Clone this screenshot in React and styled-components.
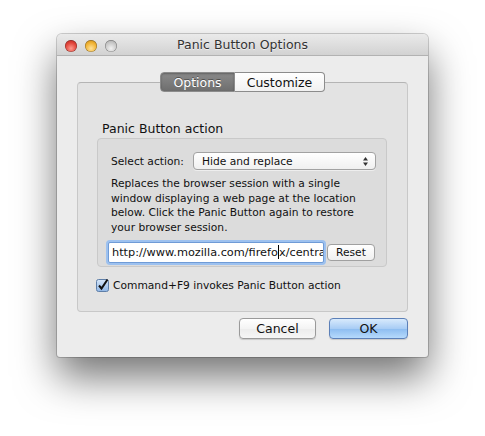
import React from "react";
import styled, { createGlobalStyle } from "styled-components";

const GlobalStyle = createGlobalStyle`
  html, body {
    margin: 0;
    background: #ffffff;
  }
  body {
    font-family: "DejaVu Sans", "Liberation Sans", sans-serif;
    font-size: 12px;
    color: #111;
  }
`;

const App = () => (
  <Page>
    <GlobalStyle />
    <Window>
      <TitleBar>
        <Lights>
          <Light $color="red" />
          <Light $color="yellow" />
          <Light $color="gray" />
        </Lights>
        <Title>Panic Button Options</Title>
      </TitleBar>
      <Body>
        <Tabs>
          <Tab $active>Options</Tab>
          <Tab>Customize</Tab>
        </Tabs>
        <TabBox>
          <GroupLabel>Panic Button action</GroupLabel>
          <Group>
            <SelectRow>
              <span>Select action:</span>
              <Popup>
                Hide and replace
                <Arrows viewBox="0 0 7 11">
                  <path d="M3.5 1 L6 4.5 H1 Z" />
                  <path d="M3.5 10 L6 6.5 H1 Z" />
                </Arrows>
              </Popup>
            </SelectRow>
            <Description>
              Replaces the browser session with a single
              <br />
              window displaying a web page at the location
              <br />
              below. Click the Panic Button again to restore
              <br />
              your browser session.
            </Description>
            <UrlRow>
              <UrlField>
                http://www.mozilla.com/firefo<Caret />x/central
              </UrlField>
              <SmallButton>Reset</SmallButton>
            </UrlRow>
          </Group>
          <CheckRow>
            <CheckBox viewBox="0 0 13 13">
              <defs>
                <linearGradient id="cb" x1="0" y1="0" x2="0" y2="1">
                  <stop offset="0" stopColor="#d6e6f8" />
                  <stop offset="1" stopColor="#8fb6e6" />
                </linearGradient>
              </defs>
              <rect x="0.5" y="0.5" width="12" height="12" rx="2" fill="url(#cb)" stroke="#5f7fa8" />
              <path d="M3 6.5 L5.5 9.5 L11.5 0.5" fill="none" stroke="#111" strokeWidth="2" />
            </CheckBox>
            Command+F9 invokes Panic Button action
          </CheckRow>
        </TabBox>
        <Buttons>
          <PushButton>Cancel</PushButton>
          <PushButton $default>OK</PushButton>
        </Buttons>
      </Body>
    </Window>
  </Page>
);

const Page = styled.div`
  padding: 34px 0 0 57px;
  height: 402px;
`;

const Window = styled.div`
  width: 371px;
  height: 323px;
  background: #ececec;
  border-radius: 5px 5px 3px 3px;
  box-shadow: 0 0 0 1px rgba(0, 0, 0, 0.18), 0 20px 40px rgba(0, 0, 0, 0.55);
  overflow: hidden;
`;

const TitleBar = styled.div`
  position: relative;
  height: 22px;
  display: flex;
  align-items: center;
  justify-content: center;
  background: linear-gradient(#eaeaea, #d2d2d2);
  border-bottom: 1px solid #b2b2b2;
  box-sizing: border-box;
`;

const Lights = styled.div`
  position: absolute;
  left: 8px;
  top: 6px;
  display: flex;
  gap: 8px;
`;

const lightColors = {
  red: "radial-gradient(circle at 50% 70%, #ff9a8e, #e0443a 55%, #a8201a)",
  yellow: "radial-gradient(circle at 50% 70%, #ffe29a, #f0b232 55%, #b57a10)",
  gray: "radial-gradient(circle at 50% 70%, #f2f2f2, #c8c8c8 55%, #9c9c9c)",
};

const Light = styled.div`
  width: 12px;
  height: 12px;
  border-radius: 50%;
  background: ${(p) => lightColors[p.$color]};
  box-shadow: inset 0 0 0 0.5px rgba(0, 0, 0, 0.4);
`;

const Title = styled.div`
  font-size: 12.5px;
  color: #333;
  text-shadow: 0 1px 0 rgba(255, 255, 255, 0.6);
`;

const Body = styled.div`
  padding: 16px 20px 0 20px;
`;

const Tabs = styled.div`
  display: flex;
  justify-content: center;
  position: relative;
  z-index: 1;
`;

const Tab = styled.div`
  height: 20px;
  box-sizing: border-box;
  display: flex;
  align-items: center;
  justify-content: center;
  font-size: 12.5px;
  border: 1px solid #8c8c8c;
  color: ${(p) => (p.$active ? "#fff" : "#111")};
  background: ${(p) =>
    p.$active
      ? "linear-gradient(#8a8a8a, #6e6e6e)"
      : "linear-gradient(#ffffff, #f1f1f1)"};
  text-shadow: ${(p) => (p.$active ? "0 -1px 0 rgba(0,0,0,0.4)" : "none")};
  box-shadow: ${(p) => (p.$active ? "inset 0 1px 2px rgba(0,0,0,0.3)" : "none")};
  &:first-child {
    border-radius: 4px 0 0 4px;
    width: 75px;
  }
  &:last-child {
    border-radius: 0 4px 4px 0;
    border-left: none;
    width: 90px;
  }
`;

const TabBox = styled.div`
  margin-top: -10px;
  height: 230px;
  box-sizing: border-box;
  background: #e3e3e3;
  border: 1px solid #c8c8c8;
  border-top-color: #b4b4b4;
  border-radius: 4px;
  padding: 38px 20px 0 19px;
`;

const GroupLabel = styled.div`
  font-size: 12.5px;
  padding-left: 5px;
  margin-bottom: 2px;
`;

const Group = styled.div`
  height: 129px;
  box-sizing: border-box;
  background: #dcdcdc;
  border: 1px solid #c9c9c9;
  border-radius: 4px;
  padding: 13px 10px 0 13px;
  font-size: 10.7px;
`;

const SelectRow = styled.div`
  display: flex;
  align-items: center;
  gap: 9px;
`;

const Popup = styled.div`
  flex: 1;
  height: 18px;
  box-sizing: border-box;
  display: flex;
  align-items: center;
  justify-content: space-between;
  padding: 0 6px 0 8px;
  background: linear-gradient(#ffffff, #f0f0f0);
  border: 1px solid #a2a2a2;
  border-radius: 4px;
  box-shadow: 0 1px 0 rgba(255, 255, 255, 0.5);
`;

const Arrows = styled.svg`
  width: 7px;
  height: 11px;
  fill: #333;
`;

const Description = styled.div`
  margin-top: 7px;
  line-height: 14.5px;
  white-space: nowrap;
`;

const UrlRow = styled.div`
  display: flex;
  align-items: center;
  gap: 3px;
  margin-top: 7px;
  margin-left: -3px;
`;

const UrlField = styled.div`
  width: 216px;
  height: 21px;
  box-sizing: border-box;
  overflow: hidden;
  white-space: nowrap;
  background: #fff;
  border: 1px solid #6f9bd6;
  box-shadow: 0 0 0 2px #9dc1ef;
  border-radius: 2px;
  padding: 2px 3px;
  line-height: 15px;
  font-size: 11.3px;
`;

const Caret = styled.span`
  display: inline-block;
  width: 1px;
  height: 14px;
  background: #000;
  vertical-align: -3px;
`;

const SmallButton = styled.div`
  height: 17px;
  box-sizing: border-box;
  display: flex;
  align-items: center;
  padding: 0 8px;
  background: linear-gradient(#ffffff, #f0f0f0);
  border: 1px solid #a0a0a0;
  border-radius: 4px;
`;

const CheckRow = styled.div`
  display: flex;
  align-items: center;
  gap: 4px;
  margin-top: 12px;
  margin-left: -1px;
  font-size: 10.7px;
`;

const CheckBox = styled.svg`
  width: 13px;
  height: 13px;
  overflow: visible;
`;

const Buttons = styled.div`
  display: flex;
  justify-content: flex-end;
  gap: 13px;
  margin-top: 6px;
`;

const PushButton = styled.div`
  height: 21px;
  width: ${(p) => (p.$default ? 79 : 77)}px;
  box-sizing: border-box;
  display: flex;
  align-items: center;
  justify-content: center;
  font-size: 12.5px;
  border-radius: 4px;
  border: 1px solid ${(p) => (p.$default ? "#5c80b8" : "#9a9a9a")};
  background: ${(p) =>
    p.$default
      ? "linear-gradient(#d8eafc, #a9cdf5 50%, #8cbcf0 51%, #b6dafc)"
      : "linear-gradient(#ffffff, #f4f4f4 50%, #ececec 51%, #f6f6f6)"};
  box-shadow: 0 1px 1px rgba(0, 0, 0, 0.15);
`;

export default App;
